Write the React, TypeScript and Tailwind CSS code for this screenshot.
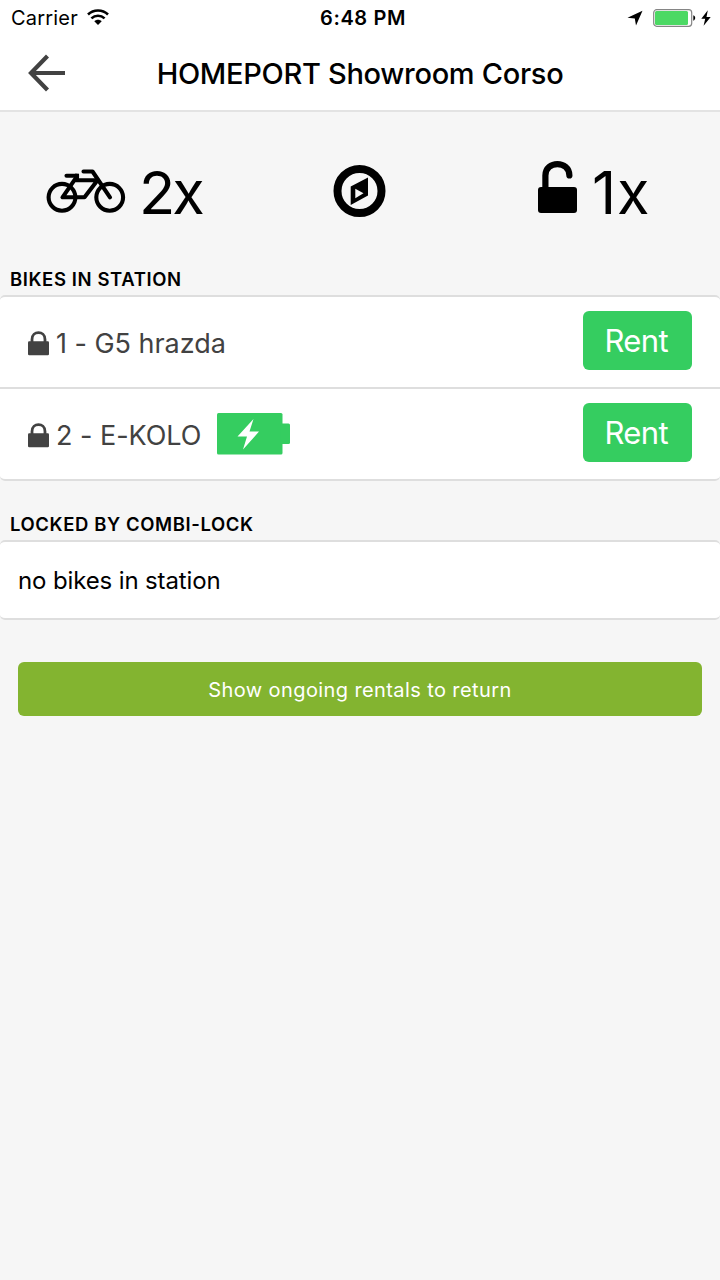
import React from "react";

function WifiIcon() {
  return (
    <svg width="22" height="17" viewBox="0 0 22 17" fill="none" stroke="#000" strokeWidth="2.6" className="mb-[1px]">
      <path d="M1 5.5C6.6.2 15.4.2 21 5.5" />
      <path d="M4.4 9.4C8.2 5.8 13.8 5.8 17.6 9.4" />
      <path d="M7.3 12.2C9.4 10.2 12.6 10.2 14.7 12.2L11 15.9Z" fill="#000" stroke="none" />
    </svg>
  );
}

function StatusBar() {
  return (
    <div className="grid h-[36px] grid-cols-[1fr_auto_1fr] items-center pr-[9px] pl-[11px]">
      <div className="flex items-center">
        <span className="w-[76px] pt-[1px] text-[20px] leading-[35px] tracking-[0.2px] whitespace-nowrap">Carrier</span>
        <WifiIcon />
      </div>
      <span className="pt-[1px] pl-[4px] text-[20px] leading-[35px] font-semibold tracking-[0.6px]">6:48 PM</span>
      <div className="flex items-center justify-end">
        <svg width="16" height="16" viewBox="0 0 16 16">
          <path d="M15.5.8L9 15.5 7.8 8.4.5 7.8Z" />
        </svg>
        <svg className="ml-[10px]" width="43" height="18" viewBox="0 0 43 18">
          <rect x=".7" y=".7" width="38" height="16.6" rx="3" fill="#fff" stroke="#858585" strokeWidth="1.2" />
          <rect x="2" y="2" width="33" height="14" rx="1.5" fill="#4cd964" />
          <path d="M40.3 6.3C42.8 7.2 42.8 10.8 40.3 11.7Z" />
        </svg>
        <svg className="ml-[5px]" width="10" height="16" viewBox="0 0 10 16">
          <path d="M6.8.2L.3 8.8H4.2L2.6 15.8 9.7 6.9H5.5Z" />
        </svg>
      </div>
    </div>
  );
}

function Header() {
  return (
    <header className="grid h-[76px] grid-cols-[1fr_auto_1fr] items-center border-b-2 border-[#e3e3e3] px-[28px]">
      <svg width="38" height="38" viewBox="0 0 38 38" fill="none" stroke="#424242" strokeWidth="4.2">
        <path d="M37 19H3.5M19.5 2L3 19 19.5 36" />
      </svg>
      <h1 className="pt-[1px] text-[29px] leading-[73px] font-medium tracking-[-0.3px] whitespace-nowrap">HOMEPORT Showroom Corso</h1>
      <span />
    </header>
  );
}

function BikeIcon() {
  return (
    <svg width="80" height="46" viewBox="0 0 80 46" fill="none" stroke="#000" strokeWidth="4.1" strokeLinejoin="round">
      <circle cx="16" cy="29.3" r="13.4" />
      <circle cx="63.7" cy="29.3" r="13.4" />
      <path d="M31.5 7.7L16.5 29.3H38.5L51.5 12.3H28.5" />
      <path d="M20.5 7.7H31" strokeLinecap="round" />
      <path d="M31 5.7V12" />
      <path d="M37.5 3.5H46.5L64 29.3" strokeLinecap="round" />
    </svg>
  );
}

function Summary() {
  return (
    <section className="flex h-[155px] items-start pt-[49px]">
      <div className="flex h-[60px] w-[308px] items-center pl-[46px]">
        <BikeIcon />
        <span className="ml-[13px] pt-[1px] text-[59.5px] leading-[60px] tracking-[-3px]">2x</span>
      </div>
      <div className="flex h-[60px] w-[104px] items-center justify-center">
        <svg width="54" height="54" viewBox="0 0 54 54">
          <circle cx="26.5" cy="27" r="22" fill="none" stroke="#000" strokeWidth="8" />
          <path fillRule="evenodd" d="M17.7 22.5L35 13.5V31.5L17.7 41ZM22.3 24.7V34.3L30.5 29.2Z" />
        </svg>
      </div>
      <div className="flex h-[60px] items-center pl-[125px]">
        <svg width="41" height="54" viewBox="0 0 41 54" className="mb-[8px]">
          <rect x="1" y="27" width="39" height="26" rx="3" />
          <path d="M8.4 29V15.5C8.4 .3 32.4 .3 32.4 15.5" fill="none" stroke="#000" strokeWidth="6.2" strokeLinecap="round" />
        </svg>
        <span className="ml-[14px] pt-[1px] text-[59.5px] leading-[60px] tracking-[0.8px]">1x</span>
      </div>
    </section>
  );
}

function SectionTitle({ children }: { children: React.ReactNode }) {
  return <h2 className="pl-[10px] text-[18.5px] leading-[24px] font-semibold tracking-[0.6px]">{children}</h2>;
}

function BikeRow({ name, electric = false }: { name: string; electric?: boolean }) {
  return (
    <li className="flex h-[90px] items-center px-[28px] text-[#424242]">
      <svg width="21" height="25" viewBox="0 0 21 25" className="mt-[2px] shrink-0">
        <rect x="0" y="10.3" width="21" height="14" rx="1.2" fill="#424242" />
        <path d="M4 12V8.5C4-.6 17-.6 17 8.5V12" fill="none" stroke="#424242" strokeWidth="2.8" />
      </svg>
      <span className="mt-[4px] ml-[7px] text-[27px] leading-[36px] tracking-[-0.03px] whitespace-nowrap">{name}</span>
      {electric && (
        <svg className="mb-[1px] ml-[16px]" width="74" height="42" viewBox="0 0 74 42">
          <rect width="65.5" height="41.5" rx="1.5" fill="#35cd60" />
          <rect x="63.5" y="10.5" width="9.5" height="20.5" rx="1.5" fill="#35cd60" />
          <path d="M36.5 6L20.5 23.5H30L26 36.5 42 18.5H32.5Z" fill="#fff" />
        </svg>
      )}
      <button className="mb-[3px] ml-auto h-[59px] w-[109.5px] rounded-[6px] bg-[#35cd60] pr-[2px] text-[31px] leading-[59px] tracking-[-0.6px] text-white">
        Rent
      </button>
    </li>
  );
}

export default function App() {
  return (
    <div className="min-h-screen w-[720px] bg-[#f6f6f6] font-['Inter',sans-serif] text-black">
      <div className="bg-white">
        <StatusBar />
        <Header />
      </div>
      <main>
        <Summary />
        <SectionTitle>BIKES IN STATION</SectionTitle>
        <ul className="mt-[4px] rounded-[5px] border-y-2 border-[#dedede] bg-white">
          <BikeRow name="1 - G5 hrazda" />
          <li className="h-[2px] bg-[#dedede]" aria-hidden="true" />
          <BikeRow name="2 - E-KOLO" electric />
        </ul>
        <div className="mt-[31px]">
          <SectionTitle>LOCKED BY COMBI-LOCK</SectionTitle>
        </div>
        <p className="mt-[4px] h-[80px] rounded-[5px] border-y-2 border-[#dedede] bg-white pl-[18px] text-[24px] leading-[78px] tracking-[-0.13px]">
          no bikes in station
        </p>
        <div className="px-[18px] pt-[42px]">
          <button className="block h-[54px] w-full rounded-[6px] bg-[#83b430] pt-[1px] text-[20px] leading-[54px] tracking-[0.4px] text-white">
            Show ongoing rentals to return
          </button>
        </div>
      </main>
    </div>
  );
}
